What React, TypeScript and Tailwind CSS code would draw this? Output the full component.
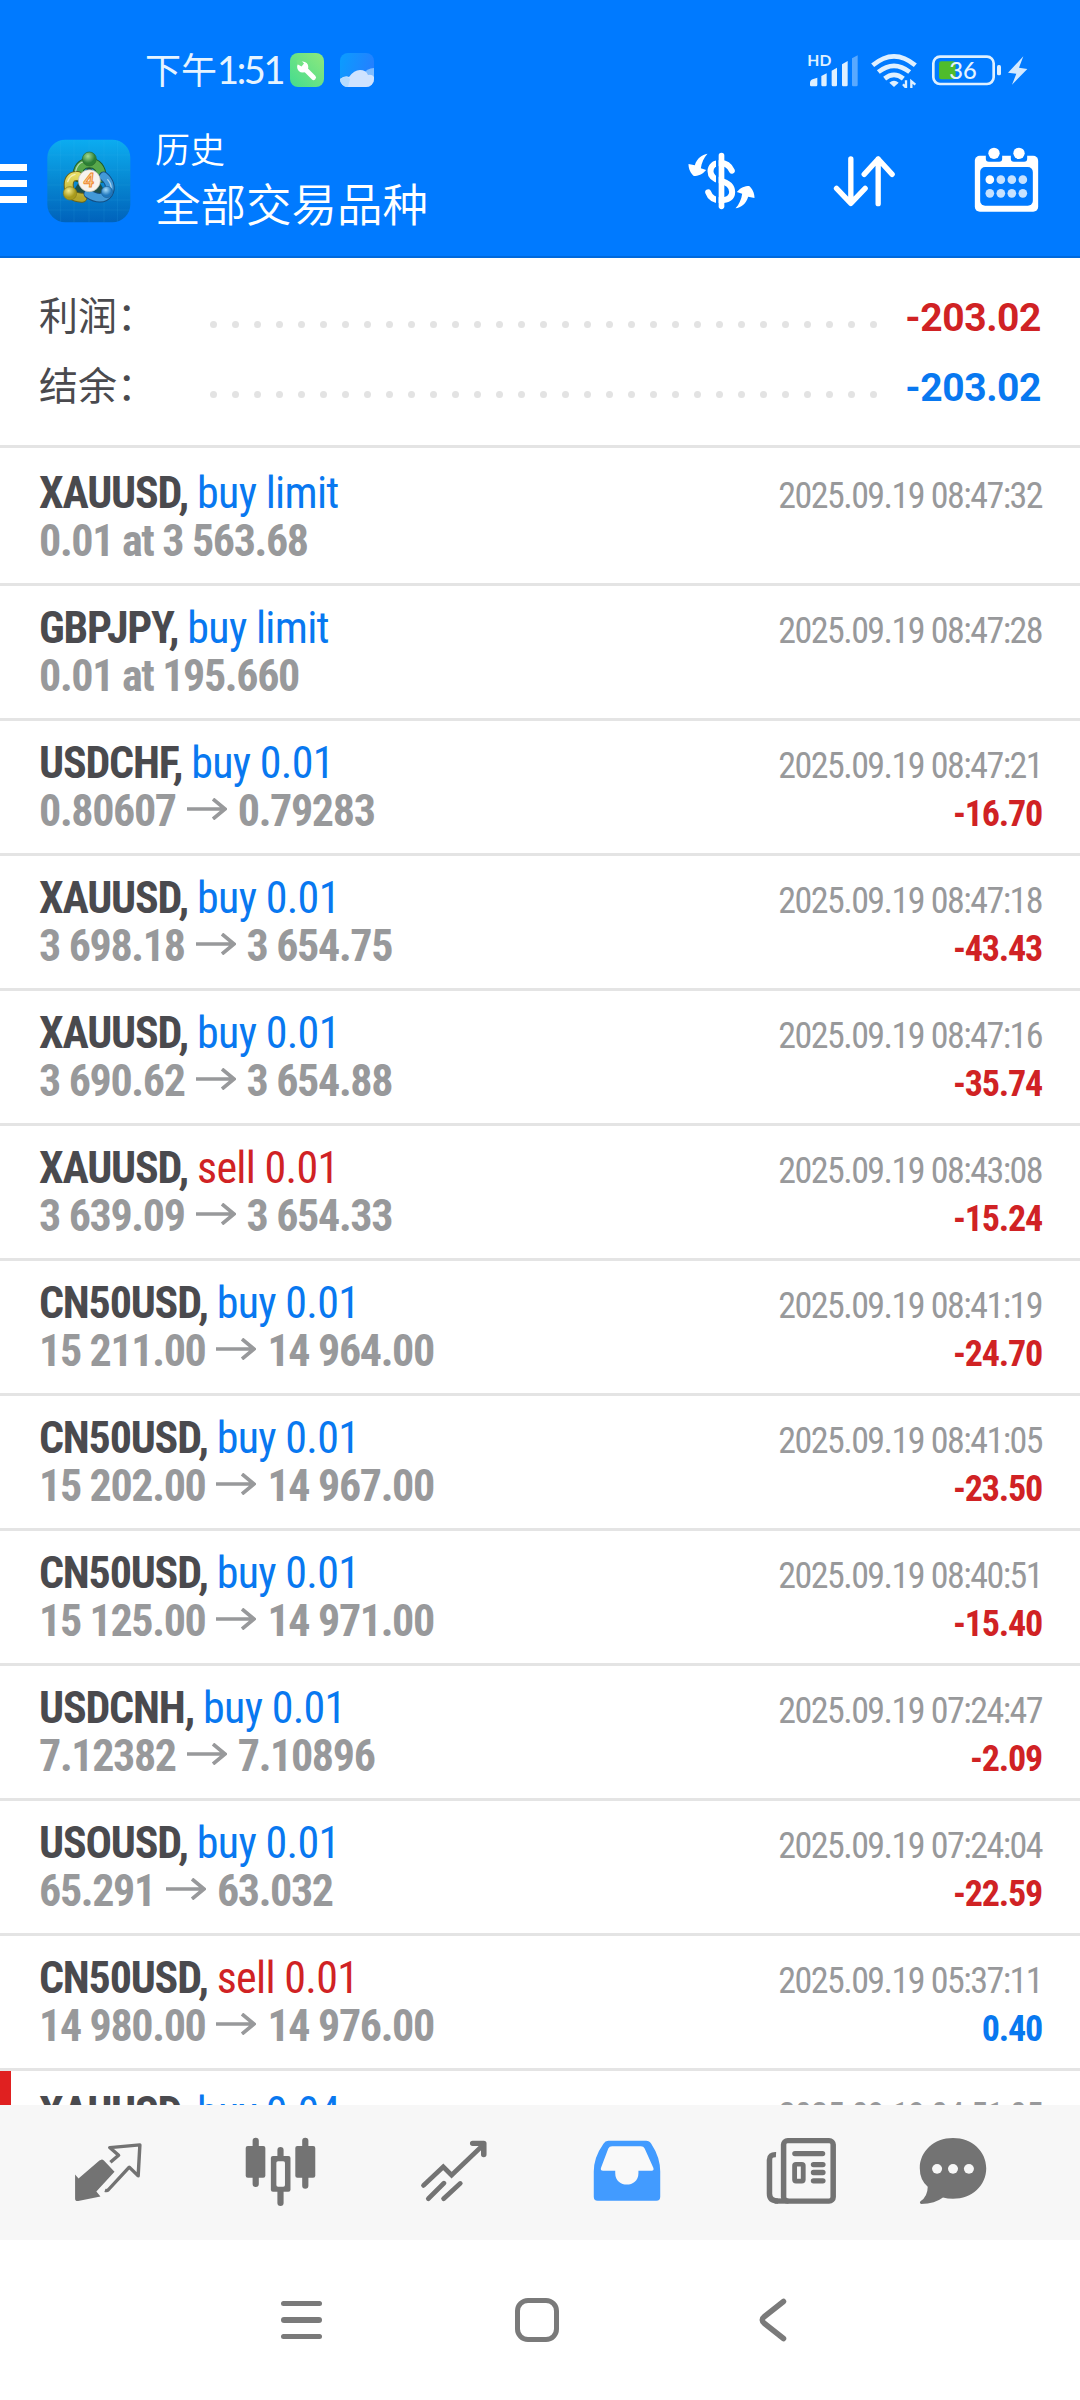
import React from 'react';

type Deal = {
  symbol: string;
  side: 'buy' | 'sell';
  volume: string;
  from?: string;
  to?: string;
  note?: string;
  time: string;
  profit?: string;
  marked?: boolean;
};

const deals: Deal[] = [
  { symbol: 'XAUUSD', side: 'buy', volume: 'limit', note: '0.01 at 3 563.68', time: '2025.09.19 08:47:32' },
  { symbol: 'GBPJPY', side: 'buy', volume: 'limit', note: '0.01 at 195.660', time: '2025.09.19 08:47:28' },
  { symbol: 'USDCHF', side: 'buy', volume: '0.01', from: '0.80607', to: '0.79283', time: '2025.09.19 08:47:21', profit: '-16.70' },
  { symbol: 'XAUUSD', side: 'buy', volume: '0.01', from: '3 698.18', to: '3 654.75', time: '2025.09.19 08:47:18', profit: '-43.43' },
  { symbol: 'XAUUSD', side: 'buy', volume: '0.01', from: '3 690.62', to: '3 654.88', time: '2025.09.19 08:47:16', profit: '-35.74' },
  { symbol: 'XAUUSD', side: 'sell', volume: '0.01', from: '3 639.09', to: '3 654.33', time: '2025.09.19 08:43:08', profit: '-15.24' },
  { symbol: 'CN50USD', side: 'buy', volume: '0.01', from: '15 211.00', to: '14 964.00', time: '2025.09.19 08:41:19', profit: '-24.70' },
  { symbol: 'CN50USD', side: 'buy', volume: '0.01', from: '15 202.00', to: '14 967.00', time: '2025.09.19 08:41:05', profit: '-23.50' },
  { symbol: 'CN50USD', side: 'buy', volume: '0.01', from: '15 125.00', to: '14 971.00', time: '2025.09.19 08:40:51', profit: '-15.40' },
  { symbol: 'USDCNH', side: 'buy', volume: '0.01', from: '7.12382', to: '7.10896', time: '2025.09.19 07:24:47', profit: '-2.09' },
  { symbol: 'USOUSD', side: 'buy', volume: '0.01', from: '65.291', to: '63.032', time: '2025.09.19 07:24:04', profit: '-22.59' },
  { symbol: 'CN50USD', side: 'sell', volume: '0.01', from: '14 980.00', to: '14 976.00', time: '2025.09.19 05:37:11', profit: '0.40' },
  { symbol: 'XAUUSD', side: 'buy', volume: '0.04', time: '2025.09.19 04:51:05', marked: true },
];

const dots = Array.from({ length: 31 }, (_, i) => i);

function SignalIcon() {
  return (
    <svg viewBox="21 20 156 108" className="w-[52px] h-[36px]" fill="#dff0ff">
      <text x="22" y="61" fontSize="46" fontWeight="700" fontFamily="Lato, sans-serif" textLength="72" lengthAdjust="spacingAndGlyphs">HD</text>
      <path d="M30 112 Q31 103 40 101 L52 97 V119 Q52 123 48 123 H34 Q30 123 30 119Z" />
      <path d="M64 92 L80 84 V119 Q80 123 76 123 H68 Q64 123 64 119Z" />
      <path d="M95 76 L111 67 V119 Q111 123 107 123 H99 Q95 123 95 119Z" />
      <path d="M126 57 L143 47 V119 Q143 123 139 123 H130 Q126 123 126 119Z" />
      <path d="M156 39 L173 30 V119 Q173 123 169 123 H160 Q156 123 156 119Z" opacity="0.4" />
    </svg>
  );
}

function WifiIcon() {
  return (
    <svg viewBox="210 20 141 108" className="w-[47px] h-[36px]" fill="none" stroke="#dff0ff">
      <path d="M218 60 Q282 6 346 60" strokeWidth="14" />
      <path d="M235 80 Q282 43 329 80" strokeWidth="14" />
      <path d="M254 100 Q282 77 310 100" strokeWidth="14" />
      <path d="M268 112 Q282 100 296 112 L282 125Z" fill="#dff0ff" stroke="none" />
      <path d="M318 105 V127 L309 117 M334 130 V108 L346 118" strokeWidth="7" />
    </svg>
  );
}

function BatteryIcon() {
  return (
    <svg viewBox="393 20 291 108" className="w-[97px] h-[36px]">
      <rect x="400" y="34" width="181" height="82" rx="20" fill="none" stroke="#dff0ff" strokeWidth="8" />
      <rect x="417" y="48" width="50" height="54" rx="7" fill="#4fbc2c" />
      <text x="489" y="102" textAnchor="middle" fontSize="71" fontFamily="Lato, sans-serif" fontWeight="500" fill="#e6f4ff">36</text>
      <rect x="591" y="59" width="12" height="31" rx="5" fill="#dff0ff" />
      <path d="M670 33 L624 82 L649 85 L636 118 L682 71 L657 67Z" fill="#d3e9ff" />
    </svg>
  );
}

function WrenchBadge() {
  return (
    <svg viewBox="0 0 34 34" className="size-[34px]">
      <defs>
        <linearGradient id="green" x1="1" y1="0" x2="0" y2="1">
          <stop offset="0" stopColor="#8fe87c" />
          <stop offset="1" stopColor="#43dc8f" />
        </linearGradient>
      </defs>
      <rect width="34" height="34" rx="8" fill="url(#green)" />
      <circle cx="12.7" cy="14" r="5.6" fill="#fff" />
      <path d="M14 15 L23.5 24.5" stroke="#fff" strokeWidth="5" strokeLinecap="round" />
      <path d="M6.5 7.5 L9.5 6 L14 10.5 L11.5 13.5 L7 11Z" fill="#71e485" />
    </svg>
  );
}

function WeatherBadge() {
  return (
    <svg viewBox="0 0 34 34" className="size-[34px]">
      <defs>
        <linearGradient id="sky" x1="0" y1="0" x2="1" y2="0.3">
          <stop offset="0" stopColor="#0a9dff" />
          <stop offset="1" stopColor="#2480ff" />
        </linearGradient>
        <clipPath id="weather"><rect width="34" height="34" rx="8" /></clipPath>
      </defs>
      <g clipPath="url(#weather)">
        <rect width="34" height="34" fill="url(#sky)" />
        <path d="M22 22 Q27 15 34 15 V34 H20Z" fill="#7fbcff" />
        <path d="M0 26 Q5 22 9 24 Q14 17 20 17 Q26 17 28 22 Q32 21 34 24 V34 H0Z" fill="#cfe3ff" />
        <path d="M0 26 Q6 22 10 26 L8 34 H0Z" fill="#b5dcff" />
      </g>
    </svg>
  );
}

function AppLogo() {
  return (
    <svg viewBox="138 12 252 252" className="size-[84px]">
      <defs>
        <linearGradient id="tile" x1="0" y1="0" x2="0" y2="1">
          <stop offset="0" stopColor="#0cacf0" />
          <stop offset="0.5" stopColor="#0788d2" />
          <stop offset="1" stopColor="#0062bb" />
        </linearGradient>
        <linearGradient id="yBody" x1="0" y1="0" x2="0" y2="1"><stop offset="0" stopColor="#e6dc62" /><stop offset="1" stopColor="#b3a52a" /></linearGradient>
        <radialGradient id="gHead" cx="0.4" cy="0.3"><stop offset="0" stopColor="#a5dc95" /><stop offset="1" stopColor="#2b7f35" /></radialGradient>
        <radialGradient id="yHead" cx="0.4" cy="0.3"><stop offset="0" stopColor="#f4ea8a" /><stop offset="1" stopColor="#a89a1c" /></radialGradient>
        <radialGradient id="bHead" cx="0.4" cy="0.3"><stop offset="0" stopColor="#a6dcfa" /><stop offset="1" stopColor="#1f77bd" /></radialGradient>
      </defs>
      <rect x="139" y="14" width="249" height="248" rx="54" fill="url(#tile)" />
      <path d="M179 16V260M219 14V262M264 14V262M309 14V262M349 16V260M140 60H387M139 105H388M139 150H388M139 195H388M142 225H385" stroke="#4cc0f5" strokeOpacity="0.18" strokeWidth="2" />
      {/* Dark gap between the three figures */}
      <path d="M265 90 L318 180 L210 180Z" fill="#1d4f4a" />
      <path d="M231 126 C228 100 242 84 265 84 C288 84 302 100 301 128" fill="none" stroke="#1f5a2a" strokeWidth="31" strokeLinecap="round" />
      <path d="M231 126 C228 100 242 84 265 84 C288 84 302 100 301 128" fill="none" stroke="#58a84b" strokeWidth="25" strokeLinecap="round" />
      <path d="M230 123 C213 121 203 132 203 150 C203 174 216 189 244 188" fill="none" stroke="#6b641a" strokeWidth="30" strokeLinecap="round" />
      <path d="M230 123 C213 121 203 132 203 150 C203 174 216 189 244 188" fill="none" stroke="url(#yBody)" strokeWidth="24" strokeLinecap="round" />
      <path d="M308 124 C325 138 332 158 322 175 C310 193 286 192 262 176" fill="none" stroke="#134e83" strokeWidth="29" strokeLinecap="round" />
      <path d="M308 124 C325 138 332 158 322 175 C310 193 286 192 262 176" fill="none" stroke="#4299d8" strokeWidth="23" strokeLinecap="round" />
      <path d="M224 108 Q230 84 248 80 M200 140 Q206 122 222 118 M320 134 Q332 148 330 160" fill="none" stroke="#fff" strokeOpacity="0.55" strokeWidth="4" strokeLinecap="round" />
      <circle cx="265" cy="72" r="21" fill="url(#gHead)" stroke="#2a6b2e" strokeWidth="2" />
      <circle cx="207" cy="175" r="20" fill="url(#yHead)" stroke="#857b1c" strokeWidth="2" />
      <circle cx="318" cy="171" r="17" fill="url(#bHead)" stroke="#1c649f" strokeWidth="2" />
      <circle cx="265" cy="137" r="33" fill="#f7f3ee" stroke="#b9b9a8" strokeWidth="2" />
      <text x="264" y="157" textAnchor="middle" fontSize="57" fontFamily="Lato, sans-serif" fontWeight="700" fontStyle="italic" fill="#fbd9b0" stroke="#ee8a2c" strokeWidth="3">4</text>
    </svg>
  );
}

function CurrencyIcon() {
  return (
    <svg viewBox="20 47 212 180" className="w-[71px] h-[60px]" fill="#fff">
      <path d="M157 106 C150 90 138 83 122 83 C104 83 93 92 93 108 C93 124 105 132 122 136 C146 142 158 152 158 170 C158 186 146 195 124 195 C104 195 92 188 86 171" fill="none" stroke="#fff" strokeWidth="18" strokeLinecap="round" />
      <path d="M113.500 64V212" stroke="#007aff" strokeWidth="8" />
      <path d="M126 61V213" stroke="#fff" strokeWidth="17" strokeLinecap="round" />
      <path d="M84 55 C68 58 52 68 46 90 L27 86 C27 102 34 114 43 122 C56 122 68 118 80 104 L64 99 C66 82 74 66 84 55Z" />
      <path d="M168 219 C184 216 200 206 206 184 L225 188 C225 172 218 160 209 152 C196 152 184 156 172 170 L188 175 C186 192 178 208 168 219Z" />
    </svg>
  );
}

function SortIcon() {
  return (
    <svg viewBox="455 47 200 180" className="w-[67px] h-[60px]" fill="none" stroke="#fff" strokeWidth="16" strokeLinecap="round" strokeLinejoin="round">
      <path d="M514 71V204M471 159L514 204L557 159M596 205V71M554 117L596 71L638 117" />
    </svg>
  );
}

function CalendarIcon() {
  return (
    <svg viewBox="880 36 200 204" className="w-[67px] h-[68px]">
      <rect x="885" y="62" width="190" height="168" rx="15" fill="#fff" />
      <rect x="901" y="96" width="158" height="116" rx="15" fill="#007aff" />
      <rect x="918" y="55" width="49" height="25" rx="9" fill="#007aff" />
      <rect x="993" y="55" width="49" height="25" rx="9" fill="#007aff" />
      <circle cx="942.500" cy="55" r="17" fill="#fff" />
      <circle cx="1017.500" cy="55" r="17" fill="#fff" />
      {[134, 175].map((cy) =>
        [930, 963, 996, 1029].map((cx) => (
          <circle key={`${cx}-${cy}`} cx={cx} cy={cy} r="13" fill="#fff" opacity={cx === 930 && cy === 134 ? 1 : 0.78} />
        ))
      )}
    </svg>
  );
}

function PriceArrow() {
  return (
    <svg viewBox="0 0 40 22" className="inline-block w-[40px] h-[22px] mx-[11px] align-[6px]" fill="none" stroke="currentColor" strokeWidth="3.600">
      <path d="M0 11H38M26 1L38 11L26 21" />
    </svg>
  );
}

/* Bottom tab icons share one drawing scale: about 3 units per pixel */
function QuotesIcon() {
  return (
    <svg viewBox="210 645 210 220" preserveAspectRatio="none" className="w-[72px] h-[73px]" fill="#737373">
      <path d="M297 719 Q300 719 303 722 L334 756 L281 815 L293 830 L228 844 Q219 845 219 836 V764 L229 776 L290 722Z" />
      <path d="M322 727 L346 706 L320 683 L408 675 L403 768 L377 742 L316 810 Q312 814 306 812" fill="none" stroke="#737373" strokeWidth="10" strokeLinejoin="round" />
    </svg>
  );
}

function ChartIcon() {
  return (
    <svg viewBox="710 645 212 220" preserveAspectRatio="none" className="w-[73px] h-[73px]" fill="#737373">
      <path d="M744 662V793M888 662V798M816 690V850" stroke="#737373" strokeWidth="18" strokeLinecap="round" />
      <rect x="715" y="678" width="57" height="96" rx="6" />
      <rect x="859" y="678" width="58" height="96" rx="6" />
      <rect x="788" y="708" width="57" height="108" rx="6" />
      <rect x="804" y="724" width="25" height="77" rx="5" fill="#f7f7f7" />
    </svg>
  );
}

function TradeIcon() {
  return (
    <svg viewBox="1215 645 208 220" preserveAspectRatio="none" className="w-[72px] h-[73px]" fill="none" stroke="#737373" strokeWidth="14" strokeLinecap="round">
      <path d="M1231 797L1288 741L1312 766L1402 676M1245 837L1290 790M1289 837L1337 791" />
      <path d="M1373 670H1405V704" strokeWidth="16" strokeLinejoin="round" />
    </svg>
  );
}

function HistoryIcon() {
  return (
    <svg viewBox="150 645 208 220" preserveAspectRatio="none" className="w-[72px] h-[73px]">
      <path d="M200 662 H309 Q319 662 324 671 Q350 712 350 755 V831 Q350 843 339 843 H169 Q158 843 158 831 V755 Q158 712 186 671 Q191 662 200 662Z" fill="#429bff" />
      <path d="M211 679 H294 Q302 679 305 686 L330 744 Q333 753 325 753 H287 V760 C287 806 220 806 220 760 V753 H185 Q176 753 179 744 L200 686 Q203 679 211 679Z" fill="#f9f9f9" />
    </svg>
  );
}

function NewsIcon() {
  return (
    <svg viewBox="652 645 212 220" preserveAspectRatio="none" className="w-[73px] h-[73px]" fill="#737373">
      <path d="M684 704 Q665 703 665 720 V822 Q665 844 690 844" fill="none" stroke="#737373" strokeWidth="16" />
      <rect x="706" y="662" width="144" height="182" rx="12" fill="none" stroke="#737373" strokeWidth="16" />
      <rect x="680" y="836" width="40" height="16" />
      <path d="M739 701H819M793 734H820M793 758H820M793 783H820" stroke="#737373" strokeWidth="16" strokeLinecap="round" />
      <rect x="738" y="733" width="25" height="51" rx="4" fill="none" stroke="#737373" strokeWidth="14" />
    </svg>
  );
}

function ChatIcon() {
  return (
    <svg viewBox="1095 645 208 220" preserveAspectRatio="none" className="w-[72px] h-[73px]" fill="#737373">
      <path d="M1199 654 C1254 654 1295 694 1295 745 C1295 797 1254 837 1199 837 Q1183 837 1170 833 Q1148 851 1106 853 Q1101 849 1105 845 Q1126 830 1126 801 Q1103 780 1103 745 C1103 694 1144 654 1199 654Z" />
      <circle cx="1153" cy="747" r="14.500" fill="#f7f7f7" />
      <circle cx="1199" cy="747" r="14.500" fill="#f7f7f7" />
      <circle cx="1245" cy="747" r="14.500" fill="#f7f7f7" />
    </svg>
  );
}

function SummaryRow({ label, value, color }: { label: string; value: string; color: string }) {
  return (
    <div className="flex items-center h-[70px]">
      <span className="w-[171px] pb-[3px] text-[39px] leading-[67px] text-[#4a4a4e] font-['Noto_Sans_CJK_SC',sans-serif]">{label}</span>
      <div className="flex gap-[15px] pt-[19px]">
        {dots.map((i) => (
          <span key={i} className="size-[7px] rounded-full bg-[#e3e3e3]" />
        ))}
      </div>
      <span className={`ml-auto pt-[6px] text-[39px] font-bold font-[Roboto,sans-serif] tracking-[-0.4px] ${color}`}>{value}</span>
    </div>
  );
}

function DealRow({ deal }: { deal: Deal }) {
  return (
    <div className="relative h-[135px] shrink-0 pt-[18px] pl-[39px] pr-[38px] border-b-[3px] border-[#e4e4e4] leading-[48px] whitespace-pre">
      {deal.marked && <span className="absolute left-0 inset-y-0 w-[11px] bg-[#e02020]" />}
      <div className="flex items-baseline justify-between h-[48px]">
        <p className="text-[44px]">
          <span className="font-bold tracking-[-1.2px] text-[#4a4a4e]">{deal.symbol}, </span>
          <span className={`tracking-[-0.7px] ${deal.side === 'buy' ? 'text-[#0878f0]' : 'text-[#d02224]'}`}>{deal.side} {deal.volume}</span>
        </p>
        <span className="text-[36px] tracking-[-1.53px] text-[#98999b]">{deal.time}</span>
      </div>
      <div className="flex items-baseline justify-between h-[48px] font-bold">
        <p className="text-[44px] tracking-[-1.35px] text-[#98999b]">
          {deal.note}
          {deal.from && <>{deal.from}<PriceArrow />{deal.to}</>}
        </p>
        {deal.profit && (
          <span className={`text-[36px] tracking-[-1.2px] ${deal.profit.startsWith('-') ? 'text-[#d02224]' : 'text-[#0878f0]'}`}>{deal.profit}</span>
        )}
      </div>
    </div>
  );
}

export default function App() {
  return (
    <div className="w-[1080px] h-[2400px] flex flex-col bg-white overflow-hidden">
      <header className="h-[258px] shrink-0 bg-[#007aff] border-b-2 border-[#0069dc] text-white font-['Noto_Sans_CJK_SC',sans-serif]">
        {/* Status bar */}
        <div className="h-[122px] pt-[17px] pl-[145px] pr-[52px] flex items-center justify-between text-[#e6f4ff]">
          <div className="flex items-center">
            <span className="pb-[3px] text-[36px] leading-[47px]">下午</span>
            <span className="w-[73px] pb-[2px] text-[38px] leading-[48px] tracking-[-2.4px] font-[Lato,sans-serif]">1:51</span>
            <WrenchBadge />
            <div className="ml-4"><WeatherBadge /></div>
          </div>
          <div className="flex items-center">
            <SignalIcon />
            <div className="ml-[11px] mr-[14px]"><WifiIcon /></div>
            <BatteryIcon />
          </div>
        </div>

        {/* Title bar */}
        <div className="h-[118px] flex items-center">
          <button className="flex flex-col gap-[9px] pt-[4px]">
            <span className="w-[27px] h-[7px] bg-white" />
            <span className="w-[27px] h-[7px] bg-white" />
            <span className="w-[27px] h-[7px] bg-white" />
          </button>
          <div className="ml-[20px]"><AppLogo /></div>
          <div className="ml-[24px] pb-[4px] font-[350]">
            <p className="text-[35px] leading-[46px]">历史</p>
            <p className="text-[45.5px] leading-[63px]">全部交易品种</p>
          </div>
          <div className="ml-auto pr-[40px] flex items-center">
            <CurrencyIcon />
            <div className="ml-[74px]"><SortIcon /></div>
            <div className="ml-[75px]"><CalendarIcon /></div>
          </div>
        </div>
      </header>

      <section className="h-[190px] shrink-0 pt-[22px] pl-[39px] pr-[39px] border-b-[3px] border-[#e4e4e4]">
        <SummaryRow label="利润：" value="-203.02" color="text-[#d02224]" />
        <SummaryRow label="结余：" value="-203.02" color="text-[#0878f0]" />
      </section>

      <main className="h-[1657px] shrink-0 pt-[3px] overflow-hidden font-['Roboto_Condensed',sans-serif] flex flex-col">
        {deals.map((deal) => (
          <DealRow key={deal.time} deal={deal} />
        ))}
      </main>

      <nav className="h-[135px] shrink-0 bg-[#f7f7f7] pl-[21px] pt-[30px] flex">
        <div className="w-[173px] flex justify-center"><QuotesIcon /></div>
        <div className="w-[173px] flex justify-center"><ChartIcon /></div>
        <div className="w-[173px] flex justify-center"><TradeIcon /></div>
        <div className="w-[174px] flex justify-center"><HistoryIcon /></div>
        <div className="w-[174px] flex justify-center"><NewsIcon /></div>
        <div className="w-[130px] flex justify-center"><ChatIcon /></div>
      </nav>

      {/* System navigation */}
      <div className="h-[160px] shrink-0 flex items-center justify-center pr-[6px]">
        <div className="w-[236px] flex justify-center">
          <div className="flex flex-col gap-[11px]">
            <span className="w-[41px] h-[5.500px] rounded-full bg-[#7a7a7a]" />
            <span className="w-[41px] h-[5.500px] rounded-full bg-[#7a7a7a]" />
            <span className="w-[41px] h-[5.500px] rounded-full bg-[#7a7a7a]" />
          </div>
        </div>
        <div className="w-[236px] flex justify-center">
          <span className="w-[44px] h-[44px] rounded-[13px] border-[5px] border-[#7a7a7a]" />
        </div>
        <div className="w-[236px] flex justify-center">
          <svg viewBox="0 0 28 44" className="w-[28px] h-[44px]" fill="none" stroke="#7a7a7a" strokeWidth="5.500" strokeLinecap="round">
            <path d="M24.500 3.500L5.500 18.500Q1 22 5.500 25.500L24.500 40.500" />
          </svg>
        </div>
      </div>
    </div>
  );
}
